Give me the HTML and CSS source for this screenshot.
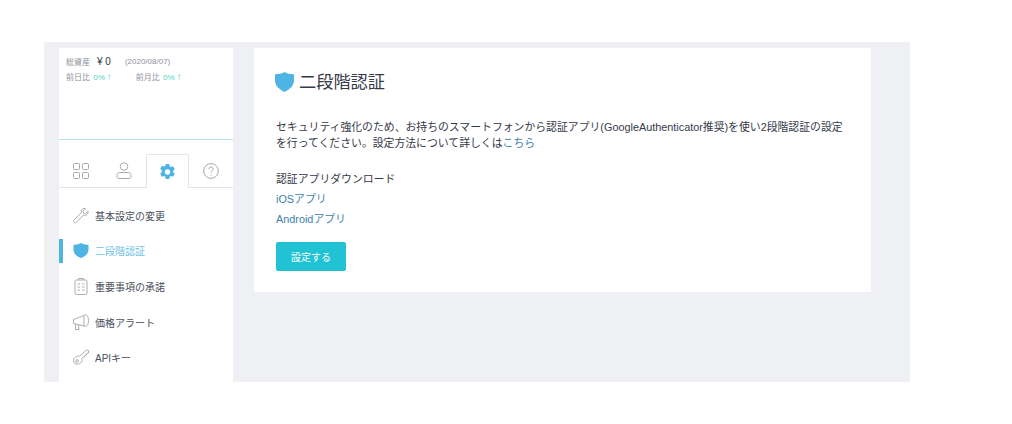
FILE: index.html
```html
<!DOCTYPE html>
<html lang="ja">
<head>
  <meta charset="UTF-8">
  <title>二段階認証</title>
  <link rel="stylesheet" href="styles.css">
</head>
<body>
  <div class="app">
    <!-- Sidebar -->
    <aside class="sidebar">
      <div class="assets">
        <div class="assets-row">
          <span class="assets-label">総資産</span>
          <span class="assets-value">¥ 0</span>
          <span class="assets-date">(2020/08/07)</span>
        </div>
        <div class="assets-row compare">
          <span class="compare-item">前日比 <b>0%</b><i>↑</i></span>
          <span class="compare-item">前月比 <b>0%</b><i>↑</i></span>
        </div>
      </div>
      <div class="tabs">
        <div class="tab">
          <svg width="18" height="16" viewBox="0 0 18 16" fill="none" stroke="#a9a9a9">
            <rect x="1.5" y="0.5" width="6" height="6" rx="1"/>
            <rect x="10.5" y="0.5" width="6" height="6" rx="1"/>
            <rect x="1.5" y="9.5" width="6" height="6" rx="1"/>
            <rect x="10.5" y="9.5" width="6" height="6" rx="1"/>
          </svg>
        </div>
        <div class="tab">
          <svg width="16" height="17" viewBox="0 0 16 17" fill="none" stroke="#a9a9a9">
            <circle cx="8" cy="4.5" r="3.8"/>
            <path d="M3.5 10.5h9c1.5 0 2.5 1.5 2.5 3v1c0 1-.7 2-2 2h-10c-1.300 0-2-1-2-2v-1c0-1.500 1-3 2.500-3z"/>
          </svg>
        </div>
        <div class="tab tab-active">
          <svg width="15" height="16" viewBox="0 0 15 16">
            <path fill="#4db4e4" fill-rule="evenodd" d="M5.800 0h3.400l.5 2.200 1.300.7 2.100-.7 1.700 3-1.600 1.500v1.600l1.600 1.500-1.700 3-2.100-.7-1.300.7-.5 2.200H5.800l-.5-2.200-1.300-.7-2.100.7-1.700-3 1.600-1.500V6.200L.2 4.700l1.700-3 2.100.7 1.300-.7zM7.500 5.300a2.700 2.700 0 1 0 0 5.400 2.700 2.700 0 0 0 0-5.400z"/>
          </svg>
        </div>
        <div class="tab">
          <svg width="16" height="16" viewBox="0 0 16 16" fill="none" stroke="#a9a9a9">
            <circle cx="8" cy="8" r="7.400"/>
            <path d="M5.800 6.200c0-1.400 1-2.200 2.200-2.200s2.200.8 2.200 2c0 1.800-2.200 1.800-2.200 3.800"/>
            <path d="M8 11.400v1.200"/>
          </svg>
        </div>
      </div>
      <nav class="menu">
        <a class="menu-item">
          <svg width="16" height="16" viewBox="0 0 16 16" fill="none" stroke="#a5a5a5" stroke-width="0.9">
            <path d="M15 3.200l-2.600 2.400-2-.5-.5-1.900L12.500.7C10.500 0 8.500 1 8.200 3c-.1.700 0 1.200.1 1.700L.9 12c-.7.800-.6 1.800 0 2.400.7.700 1.700.6 2.400 0l7.100-7.300c2.400.9 5.200-.8 4.600-3.900z"/>
          </svg>
          <span>基本設定の変更</span>
        </a>
        <a class="menu-item menu-item-active">
          <svg width="15" height="15" viewBox="0 0 15 15">
            <path fill="#4db4e4" d="M7.500 0c1.700 1.100 4.300 1.800 7.500 1.800v4.700c0 4-3.200 7-7.500 8.500C3.200 13.500 0 10.500 0 6.500V1.800C3.200 1.800 5.800 1.100 7.500 0z"/>
          </svg>
          <span>二段階認証</span>
        </a>
        <a class="menu-item">
          <svg width="14" height="17" viewBox="0 0 14 17" fill="none" stroke="#a5a5a5" stroke-width="0.9">
            <rect x="1" y="2" width="12" height="14.500" rx="1.500"/>
            <path d="M4.500 2V.5h5V2M3.500 6h2.500M8 6h2.500M3.500 9h2.500M8 9h2.500M3.500 12h2.500M8 12h2.500"/>
          </svg>
          <span>重要事項の承諾</span>
        </a>
        <a class="menu-item">
          <svg width="16" height="16" viewBox="0 0 16 16" fill="none" stroke="#a5a5a5" stroke-width="0.9">
            <path d="M.5 5.500L11 1.500v10.500L.5 9.500z"/>
            <path d="M11 1.500c1-1.500 4.500-1.200 4.500 5s-3.500 6.500-4.500 5.500"/>
            <path d="M2.500 10v5.500H6l-.5-4.500"/>
          </svg>
          <span>価格アラート</span>
        </a>
        <a class="menu-item">
          <svg width="16" height="17" viewBox="0 0 16 17" fill="none" stroke="#a5a5a5" stroke-width="0.9">
            <path d="M6.500 7.200L13.500 1l2 .5v2.500l-1.700.3-.3 1.700-1.700.3-.3 1.700-2 .3-.7 1.200c.9 2.800-1 5.500-4 5.500C2 15.500.5 13.800.5 11.700c0-2.700 3-5.300 6-4.500z"/>
            <circle cx="4" cy="12" r="1.300"/>
          </svg>
          <span>APIキー</span>
        </a>
      </nav>
    </aside>

    <!-- Main card -->
    <main class="card">
      <h1 class="card-title">
        <svg width="19" height="20" viewBox="0 0 15 15.800">
          <path fill="#4db4e4" d="M7.500 0c1.700 1.100 4.300 1.800 7.500 1.800v5c0 4-3.200 7.200-7.500 9C3.200 14 0 10.800 0 6.800v-5C3.200 1.800 5.800 1.100 7.500 0z"/>
        </svg>
        <span>二段階認証</span>
      </h1>
      <p class="lead">セキュリティ強化のため、お持ちのスマートフォンから認証アプリ(GoogleAuthenticator推奨)を使い2段階認証の設定を行ってください。設定方法について詳しくは<a class="link">こちら</a></p>
      <p class="download-title">認証アプリダウンロード</p>
      <p class="download-link"><a class="link">iOSアプリ</a></p>
      <p class="download-link"><a class="link">Androidアプリ</a></p>
      <button class="btn">設定する</button>
    </main>
  </div>
</body>
</html>
```

FILE: styles.css
```css
body {
  margin: 0;
  padding: 42px 0 0 44px;
  background: #fff;
  font-family: "Liberation Sans", "Noto Sans CJK JP", sans-serif;
  color: #343a48;
}

.app {
  width: 851px;
  height: 334px;
  padding: 6px 0 0 15px;
  display: flex;
  align-items: flex-start;
  gap: 21px;
  background: #eff0f4;
  overflow: hidden;
}

/* Sidebar */
.sidebar {
  width: 174px;
  height: 334px;
  flex: none;
  background: #fff;
}

.assets {
  height: 92px;
  box-sizing: border-box;
  padding: 6px 0 0 7px;
  border-bottom: 1px solid #b4e3e8;
  margin-bottom: 14px;
}

.assets-row {
  display: flex;
  align-items: center;
  height: 14px;
  font-size: 8px;
  color: #8d929b;
}

.assets-value {
  margin: 0 14px 0 7px;
  font-size: 10px;
  color: #30343f;
}

.compare {
  margin-top: 1px;
  gap: 24px;
}

.compare-item b {
  margin-left: 1px;
  font-weight: normal;
  color: #4fd2c8;
}

.compare-item i {
  margin-left: 2px;
  font-style: normal;
  font-size: 10px;
  line-height: 10px;
  color: #4fd2c8;
}

.tabs {
  display: flex;
  height: 33px;
  border-bottom: 1px solid #e3e4e8;
}

.tab {
  width: 43.5px;
  height: 33px;
  box-sizing: border-box;
  display: flex;
  align-items: center;
  justify-content: center;
}

.tab-active {
  width: 43px;
  height: 34px;
  background: #fff;
  border: 1px solid #e3e4e8;
  border-bottom: none;
  border-radius: 2px 2px 0 0;
}

.tab:last-child {
  width: 44px;
}

.menu {
  padding-top: 10px;
}

.menu-item {
  height: 35.5px;
  box-sizing: border-box;
  display: flex;
  align-items: center;
  gap: 6px;
  padding-left: 14px;
  font-size: 10px;
  color: #4a4f5a;
}

.menu-item svg {
  width: 16px;
  flex: none;
}

.menu-item-active {
  border-left: 4px solid #4db4e4;
  padding-left: 10px;
  height: 24px;
  margin: 5.25px 0 6.25px;
  color: #6fbfe6;
}

/* Main card */
.card {
  width: 573px;
  height: 244px;
  flex: none;
  padding: 0 22px;
  background: #fff;
}

.card-title {
  display: flex;
  align-items: center;
  gap: 5px;
  margin: 23px 0 26px -1px;
  font-size: 17.2px;
  line-height: 22px;
  font-weight: normal;
  color: #343a48;
}

.lead {
  margin: 0 0 20px;
  font-size: 10.85px;
  line-height: 16px;
}

.download-title,
.download-link {
  margin: 0 0 4px;
  font-size: 10.85px;
  line-height: 16px;
}

.link {
  color: #3d7fa8;
}

.btn {
  display: block;
  width: 70px;
  height: 29px;
  margin-top: 15px;
  padding: 0;
  border: none;
  border-radius: 2px;
  background: #20c2d4;
  color: #fff;
  font-family: inherit;
  font-size: 10px;
}
```
